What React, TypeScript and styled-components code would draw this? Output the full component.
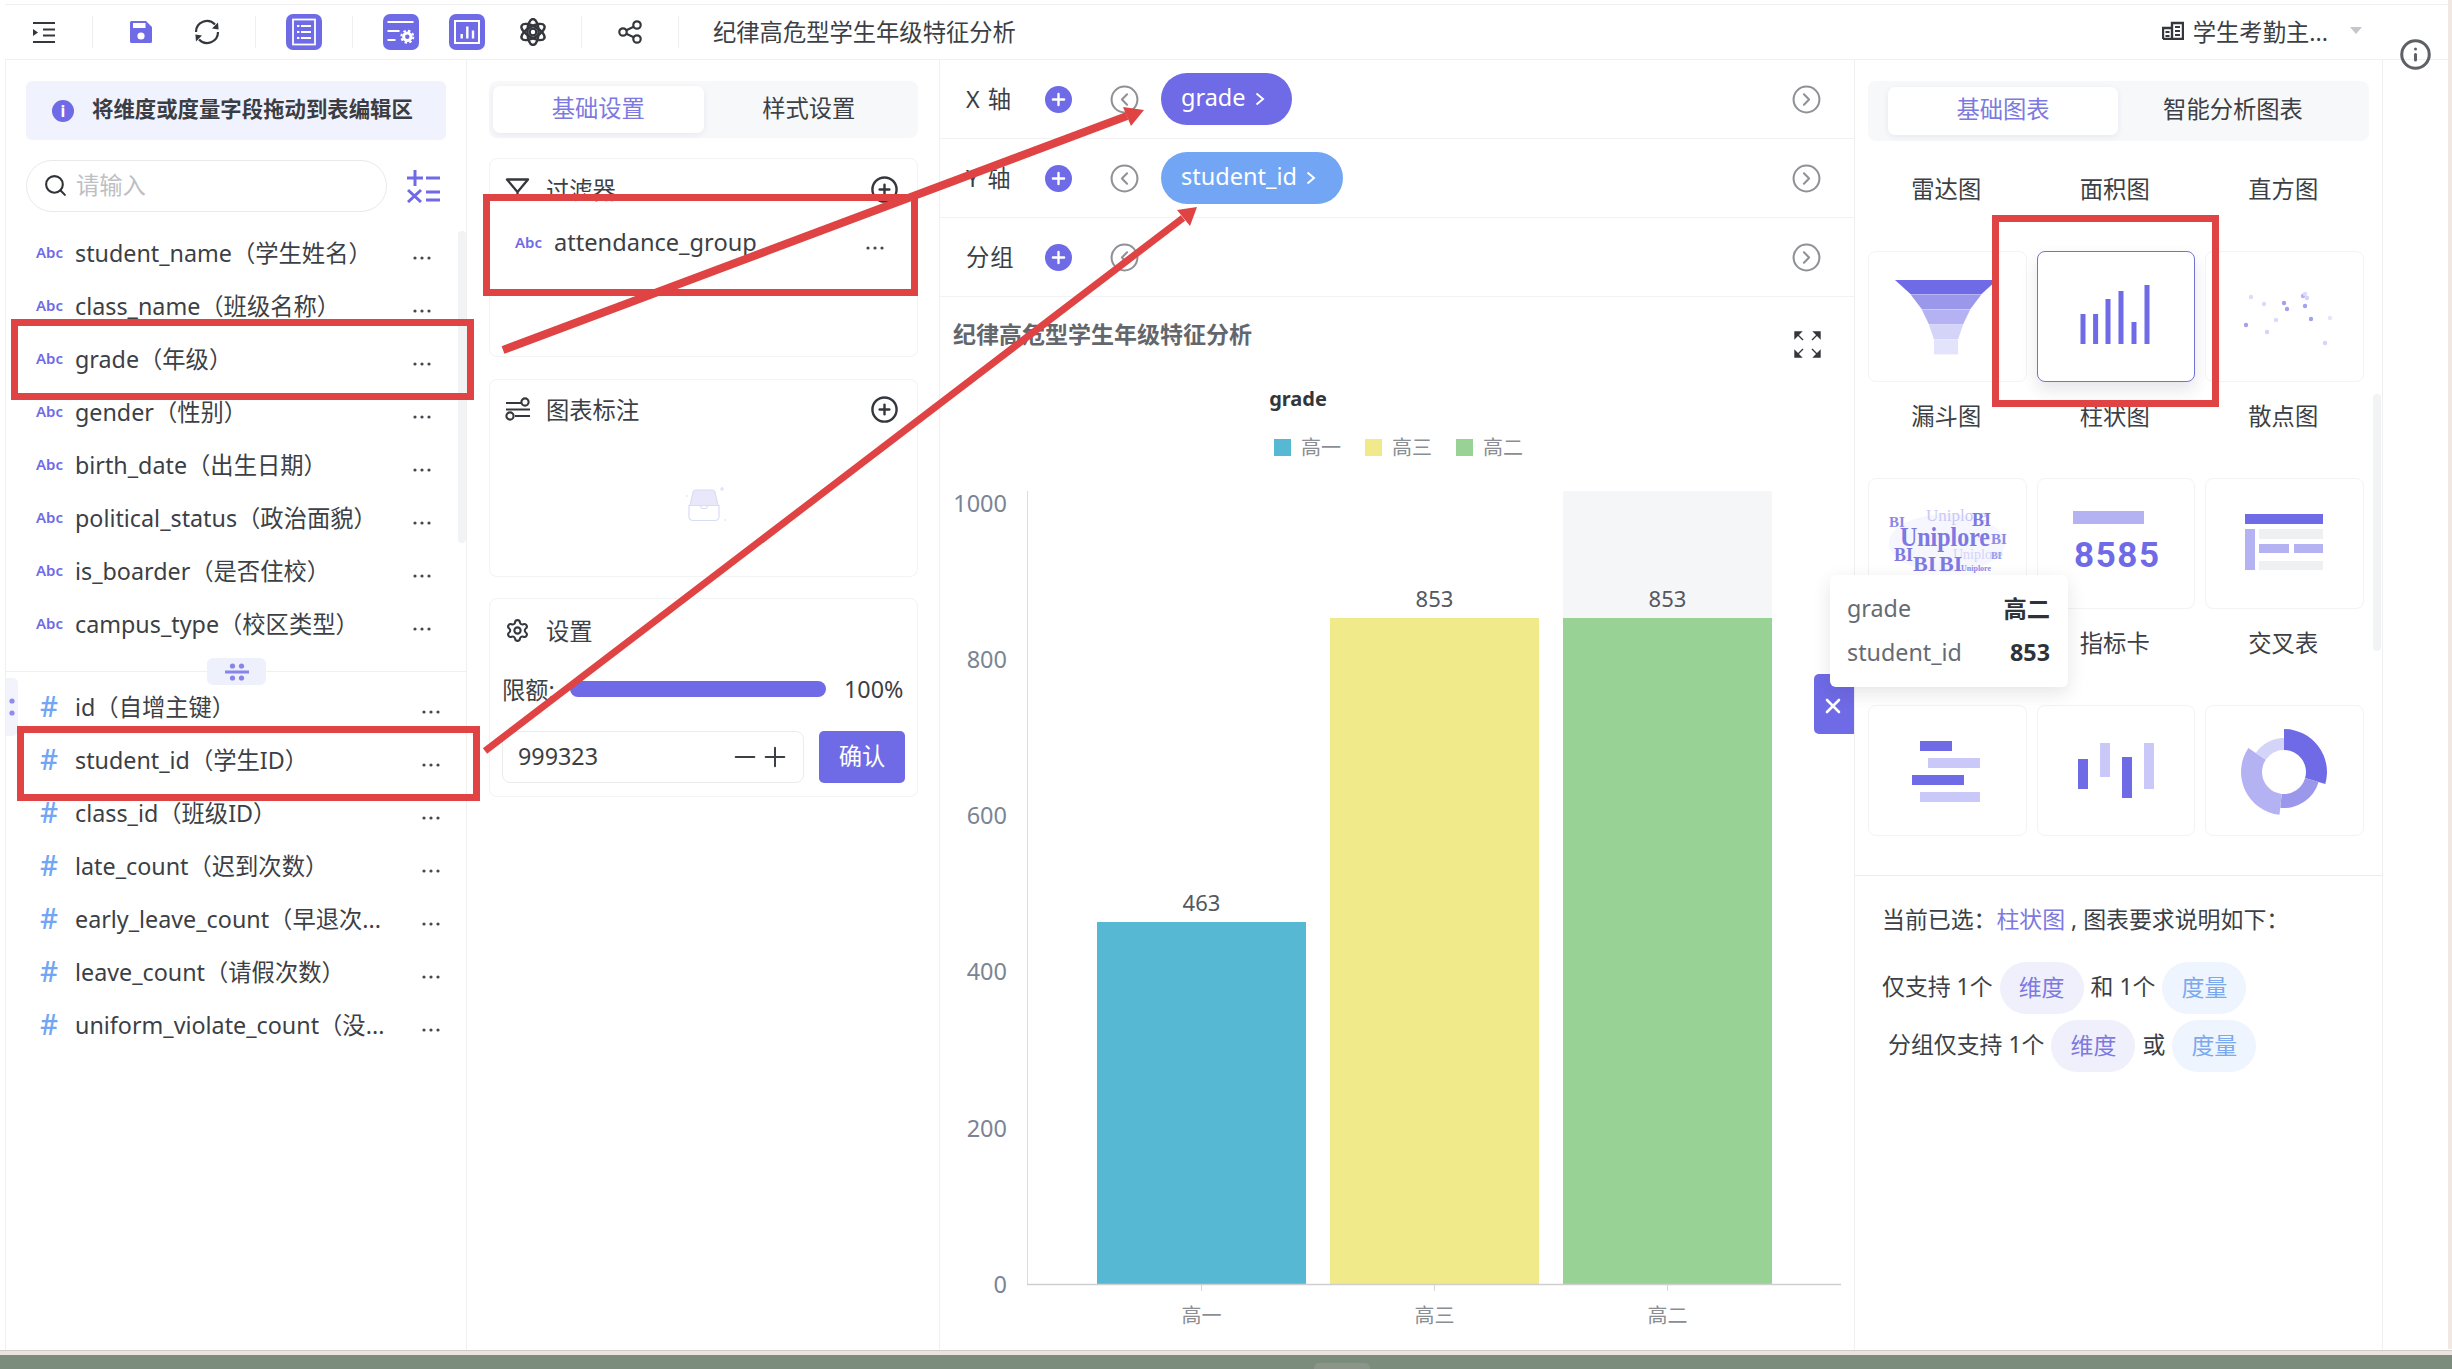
import type { ReactNode } from "react";
import styled, { createGlobalStyle } from "styled-components";
import {
  CircleChevronLeft,
  CircleChevronRight,
  CirclePlus,
  Info,
  Minus,
  Plus,
  Search,
  Settings,
  X,
} from "lucide-react";

const PURPLE = "#6f6ae6";
const BLUE = "#72a6f4";
const LIGHT = "#b4b2f2";
const PALE = "#c9c8f8";
const INK = "#34373d";

const GlobalStyle = createGlobalStyle`
  html, body {
    margin: 0;
    width: 2452px;
    height: 1369px;
    overflow: hidden;
    background: #fff;
  }
  body {
    font-family: "Noto Sans", "Noto Sans CJK SC", sans-serif;
    font-size: 23.3px;
    color: #3c3f45;
  }
`;

const Frame = styled.div`
  position: relative;
  width: 2452px;
  height: 1369px;
  display: flex;
  flex-direction: column;
  overflow: hidden;
  background: #fff;
`;

const Toolbar = styled.header`
  height: 54px;
  margin: 4px 4px 0 5px;
  padding-left: 21px;
  padding-right: 86px;
  display: flex;
  align-items: center;
  gap: 30px;
  flex: none;
  border-top: 1px solid #f0f0f0;
  border-bottom: 1px solid #f0f0f0;
`;

const ToolIcon = styled.div`
  width: 36px;
  height: 36px;
  flex: none;
  display: flex;
  align-items: center;
  justify-content: center;
  color: ${INK};
`;

const ToolBadge = styled(ToolIcon)`
  background: ${PURPLE};
  border-radius: 7px;
  color: #fff;
`;

const ToolDivider = styled.span`
  width: 1px;
  height: 32px;
  flex: none;
  background: #eeeeee;
`;

const ReportTitle = styled.div`
  margin-left: 4px;
  padding-bottom: 3px;
  white-space: nowrap;
`;

const SourcePicker = styled.div`
  margin-left: auto;
  padding-bottom: 3px;
  display: flex;
  align-items: center;
  gap: 9px;
  white-space: nowrap;
  color: #3c3f45;
`;

const Caret = styled.span`
  margin-left: 13px;
  width: 0;
  height: 0;
  border-left: 6px solid transparent;
  border-right: 6px solid transparent;
  border-top: 7px solid #c4c6ca;
`;

const Body = styled.main`
  display: flex;
  height: 1290px;
  margin-left: 5px;
  flex: none;
`;

const FieldPanel = styled.aside`
  position: relative;
  width: 462px;
  flex: none;
  border-left: 1px solid #f0f0f0;
  border-right: 1px solid #f0f0f0;
  box-sizing: border-box;
`;

const Banner = styled.div`
  margin: 21px 20px 0 20px;
  height: 59px;
  box-sizing: border-box;
  padding: 0 0 6px 26px;
  display: flex;
  align-items: center;
  gap: 18px;
  background: #f0f3fd;
  border-radius: 6px;
  font-size: 21.4px;
  font-weight: 700;
  color: #3a3d44;
  white-space: nowrap;
`;

const BannerDot = styled.span`
  width: 22px;
  height: 22px;
  margin-top: 6px;
  border-radius: 50%;
  background: ${PURPLE};
  color: #fff;
  font-size: 16px;
  line-height: 22px;
  text-align: center;
  flex: none;
`;

const SearchRow = styled.div`
  margin: 20px 26px 0 20px;
  display: flex;
  align-items: center;
  justify-content: space-between;
`;

const SearchBox = styled.div`
  width: 361px;
  height: 52px;
  box-sizing: border-box;
  border: 1px solid #e9e9ec;
  border-radius: 26px;
  display: flex;
  align-items: center;
  gap: 8px;
  padding: 0 0 4px 16px;
  color: #bdbfc4;
  svg {
    color: #2f3237;
    margin-top: 3px;
  }
`;

const FieldList = styled.div<{ $top: number }>`
  margin-top: ${(p) => p.$top}px;
`;

const FieldRowWrap = styled.div<{ $measure?: boolean }>`
  height: 53px;
  box-sizing: border-box;
  display: flex;
  align-items: center;
  padding: 0 ${(p) => (p.$measure ? 25 : 34)}px 6px ${(p) => (p.$measure ? 34 : 30)}px;
  white-space: nowrap;
`;

const TypeMark = styled.span<{ $measure?: boolean }>`
  width: ${(p) => (p.$measure ? 35 : 39)}px;
  flex: none;
  color: ${(p) => (p.$measure ? BLUE : PURPLE)};
  font-size: ${(p) => (p.$measure ? 28 : 15)}px;
  font-weight: ${(p) => (p.$measure ? 500 : 600)};
`;

const FieldName = styled.span`
  flex: 1;
  min-width: 0;
`;

const MoreDots = styled.svg`
  width: 20px;
  height: 4px;
  flex: none;
  margin-top: 12px;
  fill: #44474d;
`;

const PaneHandle = styled.div`
  position: relative;
  height: 1px;
  margin-top: 19px;
  background: #f0f0f2;
`;

const HandleTab = styled.div`
  position: absolute;
  left: 201px;
  top: -13px;
  width: 59px;
  height: 27px;
  border-radius: 6px;
  background: #eef0fb;
  display: flex;
  align-items: center;
  justify-content: center;
`;

const SideGrip = styled.div`
  position: absolute;
  left: 0;
  top: 618px;
  width: 12px;
  height: 58px;
  border-radius: 0 5px 5px 0;
  background: #f3f4fb;
  display: flex;
  align-items: center;
  justify-content: center;
`;

const ScrollThumb = styled.div<{ $top: number; $height: number; $right: number }>`
  position: absolute;
  right: ${(p) => p.$right}px;
  top: ${(p) => p.$top}px;
  width: 8px;
  height: ${(p) => p.$height}px;
  border-radius: 4px;
  background: #f2f3f5;
`;

const SettingsPanel = styled.section`
  width: 472px;
  flex: none;
  box-sizing: border-box;
  padding: 21px 21px 0 22px;
`;

const TabBar = styled.div<{ $inset: string; $height: number }>`
  height: ${(p) => p.$height}px;
  box-sizing: border-box;
  padding: ${(p) => p.$inset};
  display: flex;
  background: #f7f8fa;
  border-radius: 8px;
`;

const Tab = styled.div<{ $active?: boolean }>`
  flex: 1;
  box-sizing: border-box;
  padding-bottom: 6px;
  display: flex;
  align-items: center;
  justify-content: center;
  border-radius: 7px;
  color: ${(p) => (p.$active ? "#7d79e0" : "#3c3f45")};
  background: ${(p) => (p.$active ? "#fff" : "transparent")};
  box-shadow: ${(p) => (p.$active ? "0 2px 6px rgba(40, 40, 80, 0.07)" : "none")};
`;

const Card = styled.div<{ $top: number; $height: number; $lead: number }>`
  margin-top: ${(p) => p.$top}px;
  height: ${(p) => p.$height}px;
  box-sizing: border-box;
  border: 1px solid #f3f3f5;
  border-radius: 8px;
  padding: ${(p) => p.$lead}px 18px 0 15px;
`;

const CardHead = styled.div`
  height: 28px;
  display: flex;
  align-items: center;
  gap: 16px;
  svg {
    flex: none;
    color: ${INK};
  }
  span {
    flex: 1;
  }
`;

const FilterItem = styled.div`
  margin-top: 25px;
  display: flex;
  align-items: center;
  height: 28px;
  padding: 0 14px 0 10px;
  white-space: nowrap;
`;

const FilterName = styled.span`
  flex: 1;
  font-size: 23.6px;
`;

const EmptyBox = styled.svg`
  display: block;
  margin: 64px 0 0 179px;
`;

const QuotaRow = styled.div`
  margin: 30px 0 0 -3px;
  height: 30px;
  display: flex;
  align-items: center;
  gap: 18px;
  white-space: nowrap;
`;

const QuotaLabel = styled.span`
  width: 50px;
  flex: none;
`;

const QuotaBar = styled.div`
  width: 256px;
  height: 16px;
  flex: none;
  border-radius: 8px;
  background: ${PURPLE};
`;

const InputRow = styled.div`
  margin: 27px 0 0 -3px;
  display: flex;
  gap: 15px;
`;

const NumberBox = styled.div`
  width: 302px;
  height: 52px;
  flex: none;
  box-sizing: border-box;
  border: 1px solid #ececef;
  border-radius: 8px;
  padding: 0 12px 0 15px;
  display: flex;
  align-items: center;
  gap: 0;
  span {
    flex: 1;
    padding-bottom: 3px;
  }
  svg {
    margin-left: -2px;
  }
`;

const ConfirmButton = styled.div`
  width: 86px;
  height: 52px;
  flex: none;
  box-sizing: border-box;
  padding-bottom: 4px;
  border-radius: 5px;
  background: ${PURPLE};
  color: #fff;
  display: flex;
  align-items: center;
  justify-content: center;
`;

const ChartPanel = styled.section`
  width: 916px;
  flex: none;
  box-sizing: border-box;
  border-left: 1px solid #f0f0f2;
  border-right: 1px solid #f0f0f2;
  display: flex;
  flex-direction: column;
`;

const AxisRow = styled.div`
  height: 79px;
  flex: none;
  box-sizing: border-box;
  border-bottom: 1px solid #f2f2f4;
  padding: 0 32px 0 26px;
  display: flex;
  align-items: center;
`;

const AxisLabel = styled.span`
  width: 79px;
  flex: none;
  padding-bottom: 3px;
  letter-spacing: 1px;
`;

const AddDot = styled.span`
  width: 27px;
  height: 27px;
  flex: none;
  border-radius: 50%;
  background: ${PURPLE};
  color: #fff;
  display: flex;
  align-items: center;
  justify-content: center;
`;

const FoldLeft = styled(CircleChevronLeft)`
  margin-left: 37px;
  color: #8f9197;
  flex: none;
`;

const FoldRight = styled(CircleChevronRight)`
  margin-left: auto;
  color: #8f9197;
  flex: none;
`;

const Pill = styled.span<{ $tone: string }>`
  margin-left: 21px;
  height: 52px;
  box-sizing: border-box;
  padding: 0 27px 0 20px;
  display: flex;
  align-items: center;
  gap: 9px;
  border-radius: 26px;
  background: ${(p) => p.$tone};
  color: #fff;
  font-size: 23.5px;
  white-space: nowrap;
`;

const PillText = styled.span`
  padding-bottom: 4px;
`;

const ChartHead = styled.div`
  height: 80px;
  flex: none;
  box-sizing: border-box;
  padding: 19px 33px 0 13px;
  display: flex;
  justify-content: space-between;
  align-items: flex-start;
  font-weight: 700;
  font-size: 23px;
  color: #63666c;
  svg {
    margin-top: 15px;
  }
`;

const ChartCanvas = styled.svg`
  display: block;
  flex: none;
  text {
    font-family: "Noto Sans", "Noto Sans CJK SC", sans-serif;
  }
`;

const GalleryPanel = styled.section`
  position: relative;
  width: 528px;
  flex: none;
  box-sizing: border-box;
  border-right: 1px solid #f0f0f2;
  display: flex;
  flex-direction: column;
`;

const GalleryTop = styled.div`
  height: 816px;
  flex: none;
  box-sizing: border-box;
  padding: 21px 13px 0;
  border-bottom: 1px solid #ececef;
  overflow: hidden;
`;

const GalleryGrid = styled.div`
  margin-top: 27px;
  display: grid;
  grid-template-columns: repeat(3, 158.5px);
  column-gap: 10px;
  row-gap: 39px;
`;

const GalleryCell = styled.div`
  display: flex;
  flex-direction: column;
`;

const Thumb = styled.div<{ $selected?: boolean }>`
  height: 131px;
  box-sizing: border-box;
  border: 1px solid ${(p) => (p.$selected ? "#6f74d0" : "#f3f3f5")};
  border-radius: 8px;
  box-shadow: ${(p) => (p.$selected ? "0 8px 16px rgba(50, 50, 80, 0.12)" : "none")};
  background: #fff;
  svg {
    display: block;
  }
`;

const Caption = styled.div<{ $under?: boolean }>`
  height: 44px;
  margin-top: ${(p) => (p.$under ? 13 : 0)}px;
  box-sizing: border-box;
  padding: 0 2px 5px 0;
  display: flex;
  align-items: center;
  justify-content: center;
`;

const Notes = styled.div`
  padding: 22px 0 0 27px;
  font-size: 22.9px;
`;

const NoteLine = styled.div<{ $indent?: number; $after: number }>`
  display: flex;
  align-items: center;
  margin-left: ${(p) => p.$indent ?? 0}px;
  margin-bottom: ${(p) => p.$after}px;
  min-height: 46px;
  white-space: pre;
`;

const NoteText = styled.span`
  margin-bottom: 6px;
`;

const ChartName = styled.span`
  color: #7d79e0;
`;

const Chip = styled.span<{ $measure?: boolean }>`
  height: 52px;
  width: 84px;
  margin: 0 7px;
  box-sizing: border-box;
  padding-bottom: 5px;
  border-radius: 26px;
  display: flex;
  align-items: center;
  justify-content: center;
  background: ${(p) => (p.$measure ? "#eff5fe" : "#f0f0fc")};
  color: ${(p) => (p.$measure ? "#7aa9ee" : "#7d79e0")};
`;

const InfoRail = styled.aside`
  width: 65px;
  flex: none;
  display: flex;
  justify-content: center;
  svg {
    margin-top: -22px;
    color: #5d6066;
  }
`;

const PinkEdge = styled.div`
  position: absolute;
  top: 0;
  right: 0;
  width: 4px;
  height: 1349px;
  background: #f1e7e3;
`;

const BottomEdge = styled.div`
  height: 5px;
  flex: none;
  background: #e9e4e0;
  border-top: 1px solid #cfcac5;
  box-sizing: border-box;
`;

const Desktop = styled.div`
  position: relative;
  flex: 1;
  background: #7c8c7c;
`;

const DesktopTab = styled.div`
  position: absolute;
  left: 1314px;
  top: 8px;
  width: 56px;
  height: 10px;
  border-radius: 5px 5px 0 0;
  background: #8b9589;
`;

const HoverTip = styled.div`
  position: absolute;
  left: 1830px;
  top: 575px;
  width: 238px;
  height: 112px;
  box-sizing: border-box;
  padding: 11px 18px 0 17px;
  border-radius: 6px;
  background: #fff;
  box-shadow: 0 6px 18px rgba(40, 40, 60, 0.12);
  z-index: 3;
`;

const TipRow = styled.div`
  height: 44px;
  display: flex;
  align-items: center;
  justify-content: space-between;
  color: #666b73;
  b {
    color: #2f3237;
    font-weight: 700;
  }
`;

const CloseTab = styled.div`
  position: absolute;
  left: 1814px;
  top: 674px;
  width: 40px;
  height: 60px;
  border-radius: 5px 0 0 5px;
  background: ${PURPLE};
  color: #fff;
  display: flex;
  align-items: center;
  justify-content: center;
  padding: 3px 2px 0 0;
  box-sizing: border-box;
  z-index: 2;
`;

const Annotations = styled.svg`
  position: absolute;
  left: 0;
  top: 0;
  pointer-events: none;
  z-index: 4;
`;

const Dots = () => (
  <MoreDots viewBox="0 0 20 4">
    <circle cx="3" cy="2" r="1.6" />
    <circle cx="10" cy="2" r="1.6" />
    <circle cx="17" cy="2" r="1.6" />
  </MoreDots>
);

const FieldRow = ({ name, measure }: { name: string; measure?: boolean }) => (
  <FieldRowWrap $measure={measure}>
    <TypeMark $measure={measure}>{measure ? "#" : "Abc"}</TypeMark>
    <FieldName>{name}</FieldName>
    <Dots />
  </FieldRowWrap>
);

const MenuIcon = () => (
  <svg width="22" height="21" viewBox="0 0 22 21" fill={INK}>
    <rect width="22" height="2" />
    <rect x="10" y="6.5" width="12" height="2" />
    <rect x="10" y="12.5" width="12" height="2" />
    <rect y="19" width="22" height="2" />
    <path d="M0 7l5 3.5L0 14Z" />
  </svg>
);

const SaveIcon = () => (
  <svg width="22" height="22" viewBox="0 0 22 22" fill={PURPLE}>
    <path d="M1.5 0H16l6 6v14.5a1.5 1.5 0 0 1-1.5 1.5H1.5A1.5 1.5 0 0 1 0 20.5V1.5A1.5 1.5 0 0 1 1.5 0Z" />
    <rect x="3" y="2" width="12.5" height="5" fill="#fff" />
    <circle cx="11" cy="15" r="3.6" fill="#fff" />
  </svg>
);

const RefreshIcon = () => (
  <svg width="26" height="26" viewBox="0 0 26 26" fill="none" stroke={INK} strokeWidth="2.2">
    <path d="M2 13A11 11 0 0 1 21 5.5" />
    <path d="M24 13A11 11 0 0 1 5 20.5" />
    <path d="M24.6 10.5 18 9.5 24 3.5Z" fill={INK} stroke="none" />
    <path d="M1.4 15.5 8 16.5 2 22.5Z" fill={INK} stroke="none" />
  </svg>
);

const SheetIcon = () => (
  <svg width="36" height="36" viewBox="0 0 36 36" fill="none" stroke="#fff" strokeWidth="1.8">
    <rect x="7" y="5.5" width="22" height="25" />
    <path d="M15 12h10M15 18h10M15 24h10M11 12h2.4M11 18h2.4M11 24h2.4" />
  </svg>
);

const FormIcon = () => (
  <svg width="36" height="36" viewBox="0 0 36 36" fill="none" stroke="#fff">
    <path d="M4.5 8h26M4.5 17h12M4.5 26h8" strokeWidth="2.2" />
    <circle cx="24.3" cy="22.7" r="3.7" strokeWidth="3" />
    <circle cx="24.3" cy="22.7" r="6" strokeWidth="2" strokeDasharray="2.5 2.2" />
  </svg>
);

const BarBadgeIcon = () => (
  <svg width="36" height="36" viewBox="0 0 36 36" fill="none" stroke="#fff">
    <rect x="6" y="7" width="24" height="22" strokeWidth="2" />
    <path d="M12.7 24.5V20M18.3 24.5V12.5M24 24.5V16.5" strokeWidth="2.4" />
  </svg>
);

const AtomIcon = () => (
  <svg width="28" height="28" viewBox="0 0 28 28" fill="none" stroke={INK} strokeWidth="2.4">
    <ellipse cx="14" cy="14" rx="13" ry="5.6" transform="rotate(30 14 14)" />
    <ellipse cx="14" cy="14" rx="13" ry="5.6" transform="rotate(90 14 14)" />
    <ellipse cx="14" cy="14" rx="13" ry="5.6" transform="rotate(150 14 14)" />
    <circle cx="14" cy="14" r="3.4" />
  </svg>
);

const ShareIcon = () => (
  <svg width="24" height="24" viewBox="0 0 24 24" fill="none" stroke={INK} strokeWidth="2.2">
    <circle cx="19" cy="5" r="3.7" />
    <circle cx="5" cy="12" r="3.7" />
    <circle cx="19" cy="19" r="3.7" />
    <path d="M8.3 10.2 15.7 6.8M8.3 13.8 15.7 17.2" />
  </svg>
);

const CalcIcon = () => (
  <svg width="33" height="33" viewBox="0 0 33 33" stroke={PURPLE} strokeWidth="3" fill="none">
    <path d="M0 8h16M8 0v16M19 8h14M1 20l13 12M14 20 1 32M19 22h14M19 30h14" />
  </svg>
);

const FunnelIcon = () => (
  <svg width="25" height="25" viewBox="0 0 25 25" fill="none" stroke={INK} strokeWidth="2.3" strokeLinejoin="round">
    <path d="M2 2.5H23L12.5 15ZM12.5 15V23" />
  </svg>
);

const SlidersIcon = () => (
  <svg width="25" height="25" viewBox="0 0 25 25" fill="none" stroke={INK} strokeWidth="2.1">
    <path d="M1 6h15M1 12.5h24M10 19h15" />
    <circle cx="20" cy="5" r="3.6" />
    <circle cx="5" cy="19" r="3.6" />
  </svg>
);

const SourceIcon = () => (
  <svg width="22" height="19" viewBox="0 0 22 19" fill="none" stroke={INK} strokeWidth="2.4">
    <path d="M1 18V7h9v11M10 18V2h11v16H1" />
    <path d="M3.5 11h4M3.5 15h4M13 6h5M13 10h5M13 14h5" strokeWidth="1.9" />
  </svg>
);

const ExpandIcon = () => (
  <svg width="27" height="27" viewBox="0 0 27 27" fill={INK} stroke={INK} strokeWidth="1.4">
    <path d="M1 1h6L1 7Z" />
    <path d="M26 1h-6l6 6Z" />
    <path d="M1 26h6l-6-6Z" />
    <path d="M26 26h-6l6-6Z" />
    <path d="M2 2l7 7M25 2l-7 7M2 25l7-7M25 25l-7-7" />
  </svg>
);

const PillChevron = () => (
  <svg width="10" height="14" viewBox="0 0 10 14" fill="none" stroke="#fff" strokeWidth="2">
    <path d="M1.5 1.5 8 7l-6.5 5.5" />
  </svg>
);

const GripIcon = ({ vertical }: { vertical?: boolean }) =>
  vertical ? (
    <svg width="6" height="22" viewBox="0 0 6 22" fill={PURPLE} opacity="0.75">
      <circle cx="3" cy="5" r="2.6" />
      <circle cx="3" cy="17" r="2.6" />
    </svg>
  ) : (
    <svg width="24" height="18" viewBox="0 0 24 18" fill={PURPLE} opacity="0.8">
      <rect y="7.5" width="24" height="3" />
      <circle cx="7.5" cy="3" r="2.6" />
      <circle cx="16.5" cy="3" r="2.6" />
      <circle cx="7.5" cy="15" r="2.6" />
      <circle cx="16.5" cy="15" r="2.6" />
    </svg>
  );

const Inbox = () => (
  <EmptyBox width="44" height="36" viewBox="0 0 44 36" fill="none" stroke="#d9dcf5" strokeWidth="1.2">
    <path d="M9 5.5a3 3 0 0 1 3-2.5h16a3 3 0 0 1 3 2.5l3 13H6Z" fill="#e8e8fa" />
    <path d="M5 18.5h11l2 3h4l2-3h11v11a4 4 0 0 1-4 4H9a4 4 0 0 1-4-4Z" fill="#fff" />
    <path d="M36 2h4M38 0v4M2 9h2M40 33h2" />
  </EmptyBox>
);

const ThumbCanvas = ({ children }: { children: ReactNode }) => (
  <svg width="156" height="129" viewBox="0 0 156 129">
    {children}
  </svg>
);

const FunnelThumb = () => {
  const widths = [51, 35, 24, 17, 12, 12];
  const colors = [PURPLE, "#9b98ec", LIGHT, "#d4d3f8", "#e3e3fb"];
  return (
    <ThumbCanvas>
      {colors.map((c, i) => {
        const y = 28 + i * 15;
        const a = widths[i];
        const b = widths[i + 1];
        return <polygon key={c} fill={c} points={`${77 - a},${y} ${77 + a},${y} ${77 + b},${y + 14.4} ${77 - b},${y + 14.4}`} />;
      })}
    </ThumbCanvas>
  );
};

const BarThumb = () => {
  const columns = [
    [45, 62],
    [57.6, 62],
    [70, 47],
    [83, 39],
    [96, 70],
    [109, 33],
  ];
  return (
    <ThumbCanvas>
      {columns.map(([x, y]) => (
        <rect key={x} x={x - 2.5} y={y} width="5" height={92 - y} fill={PURPLE} />
      ))}
    </ThumbCanvas>
  );
};

const ScatterThumb = () => {
  const dots: [number, number, string][] = [
    [45, 45, "#dcdbfa"],
    [58, 52, "#dcdbfa"],
    [78, 51, "#a3a0ee"],
    [81, 57, "#a3a0ee"],
    [97, 44, "#b4b2f2"],
    [99, 42, "#dcdbfa"],
    [101, 46, "#d4d3f8"],
    [99, 54, "#a3a0ee"],
    [105, 67, "#a3a0ee"],
    [124, 66, "#e3e3fb"],
    [70, 68, "#dcdbfa"],
    [40, 73, "#a3a0ee"],
    [61, 80, "#d4d3f8"],
    [119, 91, "#d4d3f8"],
  ];
  return (
    <ThumbCanvas>
      {dots.map(([x, y, c]) => (
        <circle key={`${x}-${y}`} cx={x} cy={y} r="2.2" fill={c} />
      ))}
    </ThumbCanvas>
  );
};

const CloudThumb = () => (
  <ThumbCanvas>
    <ellipse cx="78" cy="64" rx="58" ry="29" fill="#f6f6fe" />
    <g fontFamily="'Liberation Serif', serif" fontWeight="700" fill="#7d79e0">
      <text x="57" y="42" fontSize="17" fill={PALE} fontWeight="400">Uniplore</text>
      <text x="84" y="80" fontSize="14" fill="#d4d3f8" fontWeight="400">Uniplore</text>
      <text x="31" y="67" fontSize="27" textLength="90" lengthAdjust="spacingAndGlyphs">Uniplore</text>
      <text x="122" y="65" fontSize="15" fill="#8c89e8">BI</text>
      <text x="25" y="82" fontSize="18">BI</text>
      <text x="44" y="92" fontSize="22">BI</text>
      <text x="70" y="92" fontSize="22">BI</text>
      <text x="103" y="47" fontSize="18">BI</text>
      <text x="20" y="48" fontSize="15" fill="#8c89e8">BI</text>
      <text x="92" y="92" fontSize="8" fill="#8c89e8">Uniplore</text>
      <text x="122" y="80" fontSize="10" fill="#9b98ec">BI</text>
    </g>
  </ThumbCanvas>
);

const KpiThumb = () => (
  <ThumbCanvas>
    <rect x="35" y="32" width="71" height="13" fill={LIGHT} />
    <text x="36" y="88" fontFamily="Roboto, sans-serif" fontSize="35" fontWeight="700" fill={PURPLE} letterSpacing="1.6">8585</text>
  </ThumbCanvas>
);

const CrossThumb = () => (
  <ThumbCanvas>
    <rect x="39" y="35" width="78" height="10" fill={PURPLE} />
    <rect x="39" y="50" width="10" height="41" fill={LIGHT} />
    <rect x="53" y="50" width="64" height="10" fill="#eef0f2" />
    <rect x="53" y="65" width="30" height="9" fill={LIGHT} />
    <rect x="88" y="65" width="29" height="9" fill={LIGHT} />
    <rect x="53" y="82" width="64" height="9" fill="#eef0f2" />
  </ThumbCanvas>
);

const HBarThumb = () => (
  <ThumbCanvas>
    <rect x="51" y="35" width="32" height="10" fill={PURPLE} />
    <rect x="59" y="52" width="52" height="10" fill={PALE} />
    <rect x="43" y="69" width="52" height="10" fill={PURPLE} />
    <rect x="51" y="86" width="60" height="10" fill={PALE} />
  </ThumbCanvas>
);

const ColumnThumb = () => (
  <ThumbCanvas>
    <rect x="40" y="53" width="10" height="30" fill={PURPLE} />
    <rect x="62" y="37" width="10" height="34" fill={PALE} />
    <rect x="84" y="51" width="10" height="41" fill={PURPLE} />
    <rect x="106" y="37" width="10" height="46" fill={PALE} />
  </ThumbCanvas>
);

const wedge = (from: number, to: number, outer: number, inner: number) => {
  const pt = (deg: number, r: number) => {
    const a = ((deg - 90) * Math.PI) / 180;
    return `${(78 + r * Math.cos(a)).toFixed(1)} ${(66 + r * Math.sin(a)).toFixed(1)}`;
  };
  const large = to - from > 180 ? 1 : 0;
  return `M${pt(from, outer)}A${outer} ${outer} 0 ${large} 1 ${pt(to, outer)}L${pt(to, inner)}A${inner} ${inner} 0 ${large} 0 ${pt(from, inner)}Z`;
};

const DonutThumb = () => (
  <ThumbCanvas>
    <path d={wedge(0, 106, 43, 22)} fill={PURPLE} />
    <path d={wedge(106, 186, 36, 22)} fill="#9b98ec" />
    <path d={wedge(186, 304, 43, 22)} fill={LIGHT} />
    <path d={wedge(304, 360, 34, 22)} fill="#d4d3f8" />
  </ThumbCanvas>
);

const ticks = [
  { label: "1000", y: 503 },
  { label: "800", y: 659 },
  { label: "600", y: 815 },
  { label: "400", y: 971 },
  { label: "200", y: 1128 },
  { label: "0", y: 1284 },
];

const bars = [
  { name: "高一", x: 1097, top: 921, value: "463", color: "#57b8d3" },
  { name: "高三", x: 1330, top: 617, value: "853", color: "#f1ea8a" },
  { name: "高二", x: 1563, top: 617, value: "853", color: "#98d294" },
];

const GradeChart = () => (
  <ChartCanvas width="914" height="973" viewBox="940 376 914 973">
    <rect x="1563" y="490" width="209" height="127" fill="#f5f6f8" />
    <text x="1298" y="405" textAnchor="middle" fontSize="20" fontWeight="700" fill="#33363b">grade</text>
    {bars.map((b, i) => (
      <g key={b.name}>
        <rect x={1274 + i * 91} y="438" width="17" height="17" fill={b.color} />
        <text x={1301 + i * 91} y="454" fontSize="20" fill="#8a8d92">{b.name}</text>
      </g>
    ))}
    {ticks.map((t) => (
      <text key={t.label} x="1007" y={t.y + 8} textAnchor="end" fontSize="23.5" fill="#7b8494">{t.label}</text>
    ))}
    <path d="M1027.5 490V1283" stroke="#dcdcdc" strokeWidth="1" />
    {bars.map((b) => (
      <g key={b.value + b.name}>
        <rect x={b.x} y={b.top} width="209" height={1283 - b.top} fill={b.color} />
        <text x={b.x + 104.5} y={b.top - 11} textAnchor="middle" fontSize="22" fill="#55585e">{b.value}</text>
        <path d={`M${b.x + 104.5} 1283v7`} stroke="#d5d5d5" strokeWidth="1" />
        <text x={b.x + 104.5} y="1322" textAnchor="middle" fontSize="20" fill="#8a8d92">{b.name}</text>
      </g>
    ))}
    <path d="M1027 1283.5H1841" stroke="#cfcfcf" strokeWidth="1.5" />
  </ChartCanvas>
);

const App = () => (
  <>
    <GlobalStyle />
    <Frame>
      <Toolbar>
        <ToolIcon><MenuIcon /></ToolIcon>
        <ToolDivider />
        <ToolIcon><SaveIcon /></ToolIcon>
        <ToolIcon><RefreshIcon /></ToolIcon>
        <ToolDivider />
        <ToolBadge><SheetIcon /></ToolBadge>
        <ToolDivider />
        <ToolBadge><FormIcon /></ToolBadge>
        <ToolBadge><BarBadgeIcon /></ToolBadge>
        <ToolIcon><AtomIcon /></ToolIcon>
        <ToolDivider />
        <ToolIcon><ShareIcon /></ToolIcon>
        <ToolDivider />
        <ReportTitle>纪律高危型学生年级特征分析</ReportTitle>
        <SourcePicker>
          <SourceIcon />
          学生考勤主...
          <Caret />
        </SourcePicker>
      </Toolbar>
      <Body>
        <FieldPanel>
          <Banner>
            <BannerDot>i</BannerDot>
            将维度或度量字段拖动到表编辑区
          </Banner>
          <SearchRow>
            <SearchBox>
              <Search size={25} strokeWidth={2} />
              请输入
            </SearchBox>
            <CalcIcon />
          </SearchRow>
          <ScrollThumb $top={171} $height={312} $right={0} />
          <FieldList $top={16}>
            <FieldRow name="student_name（学生姓名）" />
            <FieldRow name="class_name（班级名称）" />
            <FieldRow name="grade（年级）" />
            <FieldRow name="gender（性别）" />
            <FieldRow name="birth_date（出生日期）" />
            <FieldRow name="political_status（政治面貌）" />
            <FieldRow name="is_boarder（是否住校）" />
            <FieldRow name="campus_type（校区类型）" />
          </FieldList>
          <PaneHandle>
            <HandleTab><GripIcon /></HandleTab>
          </PaneHandle>
          <SideGrip><GripIcon vertical /></SideGrip>
          <FieldList $top={10}>
            <FieldRow measure name="id（自增主键）" />
            <FieldRow measure name="student_id（学生ID）" />
            <FieldRow measure name="class_id（班级ID）" />
            <FieldRow measure name="late_count（迟到次数）" />
            <FieldRow measure name="early_leave_count（早退次..." />
            <FieldRow measure name="leave_count（请假次数）" />
            <FieldRow measure name="uniform_violate_count（没..." />
          </FieldList>
        </FieldPanel>
        <SettingsPanel>
          <TabBar $inset="5px 4px 5px 4px" $height={57}>
            <Tab $active>基础设置</Tab>
            <Tab>样式设置</Tab>
          </TabBar>
          <Card $top={20} $height={199} $lead={16}>
            <CardHead>
              <FunnelIcon />
              <span>过滤器</span>
              <CirclePlus size={29} strokeWidth={2} />
            </CardHead>
            <FilterItem>
              <TypeMark>Abc</TypeMark>
              <FilterName>attendance_group</FilterName>
              <Dots />
            </FilterItem>
          </Card>
          <Card $top={22} $height={198} $lead={15}>
            <CardHead>
              <SlidersIcon />
              <span>图表标注</span>
              <CirclePlus size={29} strokeWidth={2} />
            </CardHead>
            <Inbox />
          </Card>
          <Card $top={21} $height={199} $lead={17}>
            <CardHead>
              <Settings size={25} strokeWidth={2} />
              <span>设置</span>
            </CardHead>
            <QuotaRow>
              <QuotaLabel>限额:</QuotaLabel>
              <QuotaBar />
              100%
            </QuotaRow>
            <InputRow>
              <NumberBox>
                <span>999323</span>
                <Minus size={32} strokeWidth={1.5} />
                <Plus size={32} strokeWidth={1.5} />
              </NumberBox>
              <ConfirmButton>确认</ConfirmButton>
            </InputRow>
          </Card>
        </SettingsPanel>
        <ChartPanel>
          <AxisRow>
            <AxisLabel>X 轴</AxisLabel>
            <AddDot><Plus size={19} strokeWidth={3} /></AddDot>
            <FoldLeft size={31} strokeWidth={1.6} />
            <Pill $tone={PURPLE}><PillText>grade</PillText><PillChevron /></Pill>
            <FoldRight size={31} strokeWidth={1.6} />
          </AxisRow>
          <AxisRow>
            <AxisLabel>Y 轴</AxisLabel>
            <AddDot><Plus size={19} strokeWidth={3} /></AddDot>
            <FoldLeft size={31} strokeWidth={1.6} />
            <Pill $tone={BLUE}><PillText>student_id</PillText><PillChevron /></Pill>
            <FoldRight size={31} strokeWidth={1.6} />
          </AxisRow>
          <AxisRow>
            <AxisLabel>分组</AxisLabel>
            <AddDot><Plus size={19} strokeWidth={3} /></AddDot>
            <FoldLeft size={31} strokeWidth={1.6} />
            <FoldRight size={31} strokeWidth={1.6} />
          </AxisRow>
          <ChartHead>
            纪律高危型学生年级特征分析
            <ExpandIcon />
          </ChartHead>
          <GradeChart />
        </ChartPanel>
        <GalleryPanel>
          <GalleryTop>
            <TabBar $inset="6px 21px 6px 20px" $height={60}>
              <Tab $active>基础图表</Tab>
              <Tab>智能分析图表</Tab>
            </TabBar>
            <GalleryGrid>
              <Caption>雷达图</Caption>
              <Caption>面积图</Caption>
              <Caption>直方图</Caption>
              <GalleryCell>
                <Thumb><FunnelThumb /></Thumb>
                <Caption $under>漏斗图</Caption>
              </GalleryCell>
              <GalleryCell>
                <Thumb $selected><BarThumb /></Thumb>
                <Caption $under>柱状图</Caption>
              </GalleryCell>
              <GalleryCell>
                <Thumb><ScatterThumb /></Thumb>
                <Caption $under>散点图</Caption>
              </GalleryCell>
              <GalleryCell>
                <Thumb><CloudThumb /></Thumb>
                <Caption $under />
              </GalleryCell>
              <GalleryCell>
                <Thumb><KpiThumb /></Thumb>
                <Caption $under>指标卡</Caption>
              </GalleryCell>
              <GalleryCell>
                <Thumb><CrossThumb /></Thumb>
                <Caption $under>交叉表</Caption>
              </GalleryCell>
              <Thumb><HBarThumb /></Thumb>
              <Thumb><ColumnThumb /></Thumb>
              <Thumb><DonutThumb /></Thumb>
            </GalleryGrid>
          </GalleryTop>
          <ScrollThumb $top={334} $height={257} $right={1} />
          <Notes>
            <NoteLine $after={18}>
              <NoteText>当前已选：<ChartName>柱状图</ChartName> , 图表要求说明如下：</NoteText>
            </NoteLine>
            <NoteLine $after={6}>
              <NoteText>仅支持 1个</NoteText>
              <Chip>维度</Chip>
              <NoteText>和 1个</NoteText>
              <Chip $measure>度量</Chip>
            </NoteLine>
            <NoteLine $indent={6} $after={6}>
              <NoteText>分组仅支持 1个</NoteText>
              <Chip>维度</Chip>
              <NoteText>或</NoteText>
              <Chip $measure>度量</Chip>
            </NoteLine>
          </Notes>
        </GalleryPanel>
        <InfoRail>
          <Info size={33} strokeWidth={2.2} />
        </InfoRail>
      </Body>
      <BottomEdge />
      <Desktop><DesktopTab /></Desktop>
      <PinkEdge />
      <CloseTab><X size={24} strokeWidth={2.6} /></CloseTab>
      <HoverTip>
        <TipRow>grade<b>高二</b></TipRow>
        <TipRow>student_id<b>853</b></TipRow>
      </HoverTip>
      <Annotations width="2452" height="1369" viewBox="0 0 2452 1369" fill="none" stroke="#e04343" strokeWidth="7">
        <rect x="14.5" y="322.5" width="456" height="74" />
        <rect x="486.5" y="197.5" width="428" height="95" />
        <rect x="20.5" y="729.5" width="456" height="68" />
        <rect x="1995.5" y="218.5" width="220" height="185" />
        <path d="M503 350 1127 116" strokeWidth="8" />
        <polygon points="1144,110 1131,126 1123,107" fill="#e04343" stroke="none" />
        <path d="M485 751 1183 218" strokeWidth="7" />
        <polygon points="1197,207 1190,226 1177,210" fill="#e04343" stroke="none" />
      </Annotations>
    </Frame>
  </>
);

export default App;
